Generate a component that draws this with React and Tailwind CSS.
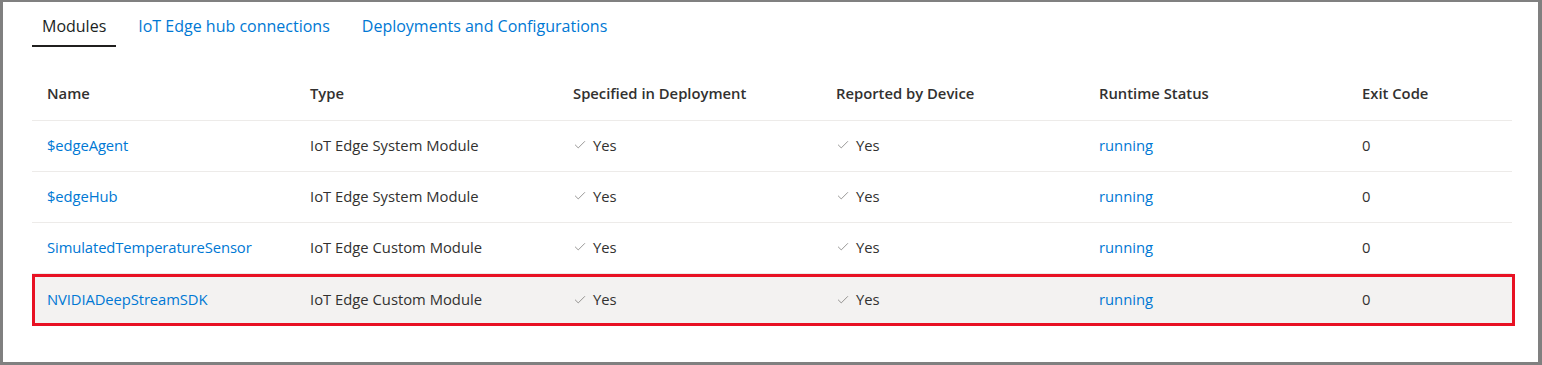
import React from 'react';
import { Check } from 'lucide-react';

const rows = [
  { name: '$edgeAgent', type: 'IoT Edge System Module' },
  { name: '$edgeHub', type: 'IoT Edge System Module' },
  { name: 'SimulatedTemperatureSensor', type: 'IoT Edge Custom Module' },
  { name: 'NVIDIADeepStreamSDK', type: 'IoT Edge Custom Module', selected: true },
];

const headers = ['Name', 'Type', 'Specified in Deployment', 'Reported by Device', 'Runtime Status', 'Exit Code'];

const Yes = () => (
  <span className="flex items-center gap-[6px]">
    <Check size={14} strokeWidth={1.1} className="text-[#605e5c]" />
    <span>Yes</span>
  </span>
);

const Row = ({ row }) => {
  // выделенная строка обведена красной рамкой
  const cls = row.selected
    ? 'grid grid-cols-[260px_263px_263px_263px_263px_1fr] items-center h-[52px] pb-[1px] border-[3px] border-[#e81123] bg-[#f3f2f1] -mr-[3px]'
    : 'grid grid-cols-[263px_263px_263px_263px_263px_1fr] items-center h-[51px] pb-[2px] border-b border-[#edebe9]';
  const pad = row.selected ? 'pl-[12px]' : 'pl-[15px]';
  return (
    <div className={cls}>
      <div className={pad}>
        <span className="text-[#0078d4] tracking-[-0.1px]">{row.name}</span>
      </div>
      <div className="pl-[15px]">{row.type}</div>
      <div className="pl-[15px]"><Yes /></div>
      <div className="pl-[15px]"><Yes /></div>
      <div className="pl-[15px] text-[#0078d4]">running</div>
      <div className="pl-[15px]">0</div>
    </div>
  );
};

export default function App() {
  return (
    <div
      className="h-[365px] w-[1542px] bg-white border-l-[3px] border-t-2 border-r-4 border-b-[3px] border-[#808080] text-[14.8px] text-[#323130]"
      style={{ fontFamily: '"Segoe UI", "Open Sans", sans-serif' }}
    >
      <div className="pl-[29px] pt-[14px] flex gap-[12px] text-[16px]">
        <div className="h-[31px] px-[10px] border-b-2 border-[#201f1e] leading-5 text-[#201f1e]">Modules</div>
        <div className="h-[31px] px-[10px] leading-5 text-[#0078d4]">IoT Edge hub connections</div>
        <div className="h-[31px] px-[10px] leading-5 text-[#0078d4]">Deployments and Configurations</div>
      </div>

      <div className="ml-[29px] w-[1480px] mt-[23px]">
        <div className="grid grid-cols-[263px_263px_263px_263px_263px_1fr] items-center h-[51px] pb-[3px] border-b border-[#edebe9] font-semibold">
          {headers.map((h) => (
            <div key={h} className="pl-[15px]">{h}</div>
          ))}
        </div>
        {rows.map((r) => (
          <Row key={r.name} row={r} />
        ))}
      </div>
    </div>
  );
}
